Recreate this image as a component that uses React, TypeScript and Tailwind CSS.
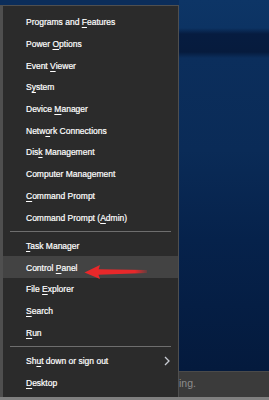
import React from 'react'

type Item = { label: string; highlight?: boolean; submenu?: boolean } | 'sep'

const items: Item[] = [
  { label: 'Programs and &Features' },
  { label: 'Power &Options' },
  { label: 'Event &Viewer' },
  { label: 'S&ystem' },
  { label: 'Device &Manager' },
  { label: 'Netw&ork Connections' },
  { label: 'Dis&k Management' },
  { label: 'Computer Management' },
  { label: '&Command Prompt' },
  { label: 'Command Prompt (&Admin)' },
  'sep',
  { label: '&Task Manager' },
  { label: 'Control &Panel', highlight: true },
  { label: 'File &Explorer' },
  { label: '&Search' },
  { label: '&Run' },
  'sep',
  { label: 'Sh&ut down or sign out', submenu: true },
  { label: '&Desktop' },
]

// "&" marks the access key, windows-style
function Label({ text }: { text: string }) {
  const i = text.indexOf('&')
  if (i < 0) return <>{text}</>
  return (
    <>
      {text.slice(0, i)}
      <span className="underline underline-offset-[1.5px]">{text[i + 1]}</span>
      {text.slice(i + 2)}
    </>
  )
}

function RedArrow() {
  return (
    <svg
      className="absolute left-[80px] top-[258px] w-[72px] h-[22px] pointer-events-none"
      viewBox="80 258 72 22"
    >
      <defs>
        <linearGradient id="tail" x1="0" x2="1" y1="0" y2="0">
          <stop offset="0" stopColor="#e8282a" />
          <stop offset="0.75" stopColor="#e8282a" />
          <stop offset="1" stopColor="#e8282a" stopOpacity="0.2" />
        </linearGradient>
      </defs>
      <polygon points="84.5,272.5 100,265 98.5,269.8 98.5,274.8 100,279" fill="#e8282a" />
      <polygon points="98,269.3 147,270 147,273 98,274.8" fill="url(#tail)" />
    </svg>
  )
}

export default function App() {
  return (
    <div className="relative w-[269px] h-[400px] overflow-hidden bg-[#0b2d5a] font-['Segoe_UI','Liberation_Sans',sans-serif]">
      <div className="flex h-[397px]">
        {/* Win+X menu */}
        <div className="w-[180px] pt-[5px] flex flex-col">
          <div className="flex-1 bg-[#2b2b2b] border-l-[3px] border-r-[2px] border-t border-[#4f4f4f] pt-[5px] flex flex-col">
            {items.map((it, idx) =>
              it === 'sep' ? (
                <div key={idx} className="h-[6.6px] flex items-center px-[7px]">
                  <div className="h-px w-full bg-[#6e6e6e]" />
                </div>
              ) : (
                <div
                  key={idx}
                  className={
                    'h-[21.7px] flex items-center pl-[23px] pr-[6px] pt-[1.5px] text-[8.5px] text-white [-webkit-text-stroke:0.2px_#ffffff] ' +
                    (it.highlight ? 'bg-[#434343]' : '')
                  }
                >
                  <span className="flex-1 leading-none">
                    <Label text={it.label} />
                  </span>
                  {it.submenu && (
                    <svg width="6" height="10" viewBox="0 0 6 10" className="mr-[2px]">
                      <path d="M1 1 L5 5 L1 9" fill="none" stroke="#c9ccd4" strokeWidth="1.3" />
                    </svg>
                  )}
                </div>
              )
            )}
          </div>
        </div>

        {/* desktop behind */}
        <div className="flex-1 flex flex-col -ml-px">
          <div className="flex-1 bg-[linear-gradient(180deg,#0d3566_0px,#0c3363_28px,#061c40_34px,#061b3d_52px,#0b2e5c_58px,#0a2b57_150px,#06224b_240px,#041a3d_370px)]" />
          <div className="h-[26px] bg-[#3b3b3b] border-t border-[#4a4a4a] flex items-center text-[10.5px] text-[#8d8d8d] pb-[1px]">
            ing.
          </div>
        </div>
      </div>
      <div className="h-[3px] bg-[#808080]" />
      <RedArrow />
    </div>
  )
}
